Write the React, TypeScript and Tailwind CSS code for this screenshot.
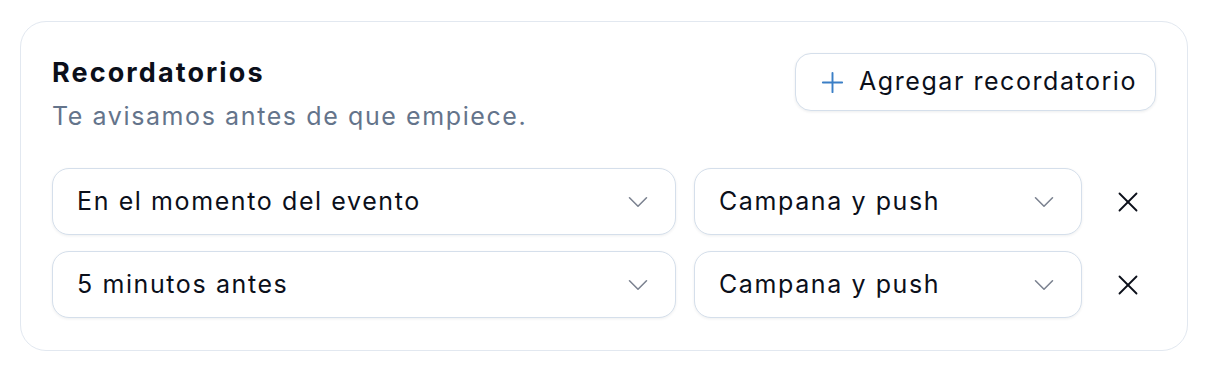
import { ChevronDown, Plus, X } from "lucide-react"

const reminders = [
  { when: "En el momento del evento", channel: "Campana y push" },
  { when: "5 minutos antes", channel: "Campana y push" },
]

function Select({ value, className }: { value: string; className?: string }) {
  return (
    <button
      className={
        "flex h-[67px] shrink-0 items-center justify-between rounded-[17px] border border-[#d5dfeb] bg-white pl-6 pr-5 text-[25px] tracking-[1.6px] text-[#0b0f1a] shadow-[0_1px_3px_rgba(15,23,42,0.07)] " +
        (className ?? "")
      }
    >
      <span>{value}</span>
      <ChevronDown size={34} strokeWidth={1.1} className="text-[#7b8290]" />
    </button>
  )
}

export default function App() {
  return (
    <div className="bg-white px-5 pt-[21px] font-['Inter',sans-serif]">
      <section className="w-[1168px] rounded-[26px] border border-[#e2e8f0] bg-white pb-8 pl-[31px] pr-[31px] pt-8">
        {/* Header */}
        <div className="flex items-start justify-between">
          <div className="pt-[3px]">
            <h2 className="text-[27px] font-bold leading-8 tracking-[2.1px] text-[#0b0f1a]">Recordatorios</h2>
            <p className="mt-[11px] text-[25px] leading-8 tracking-[1.6px] text-[#64748b]">Te avisamos antes de que empiece.</p>
          </div>
          <button className="-mt-[1px] flex h-[58px] items-center gap-[10px] rounded-[16px] border border-[#d5dfeb] bg-white pl-5 pr-[18px] text-[25px] tracking-[1.55px] text-[#0b0f1a] shadow-[0_1px_3px_rgba(15,23,42,0.08)]">
            <Plus size={33} strokeWidth={1.4} className="text-[#3b7fc6]" />
            Agregar recordatorio
          </button>
        </div>

        {/* Rows */}
        <div className="mt-[36px] flex flex-col gap-4">
          {reminders.map((r, i) => (
            <div key={i} className="flex items-center gap-[18px]">
              <Select value={r.when} className="w-[624px]" />
              <Select value={r.channel} className="w-[388px]" />
              <button className="flex w-14 items-center justify-center text-[#0b0f1a]">
                <X size={34} strokeWidth={1.3} />
              </button>
            </div>
          ))}
        </div>
      </section>
    </div>
  )
}
